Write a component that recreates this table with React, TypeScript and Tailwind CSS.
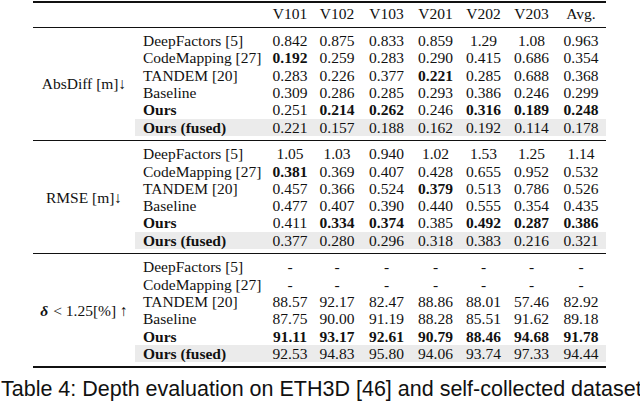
import React from 'react'

// "*" in front of a value means the cell is bold
type Row = { name: string; bold?: boolean; fused?: boolean; vals: string[] }
type Section = { label: React.ReactNode; rows: Row[] }

const cols = ['V101', 'V102', 'V103', 'V201', 'V202', 'V203', 'Avg.']

const sections: Section[] = [
  {
    label: <>AbsDiff [m]↓</>,
    rows: [
      { name: 'DeepFactors [5]', vals: ['0.842', '0.875', '0.833', '0.859', '1.29', '1.08', '0.963'] },
      { name: 'CodeMapping [27]', vals: ['*0.192', '0.259', '0.283', '0.290', '0.415', '0.686', '0.354'] },
      { name: 'TANDEM [20]', vals: ['0.283', '0.226', '0.377', '*0.221', '0.285', '0.688', '0.368'] },
      { name: 'Baseline', vals: ['0.309', '0.286', '0.285', '0.293', '0.386', '0.246', '0.299'] },
      { name: 'Ours', bold: true, vals: ['0.251', '*0.214', '*0.262', '0.246', '*0.316', '*0.189', '*0.248'] },
      { name: 'Ours (fused)', bold: true, fused: true, vals: ['0.221', '0.157', '0.188', '0.162', '0.192', '0.114', '0.178'] },
    ],
  },
  {
    label: <>RMSE [m]↓</>,
    rows: [
      { name: 'DeepFactors [5]', vals: ['1.05', '1.03', '0.940', '1.02', '1.53', '1.25', '1.14'] },
      { name: 'CodeMapping [27]', vals: ['*0.381', '0.369', '0.407', '0.428', '0.655', '0.952', '0.532'] },
      { name: 'TANDEM [20]', vals: ['0.457', '0.366', '0.524', '*0.379', '0.513', '0.786', '0.526'] },
      { name: 'Baseline', vals: ['0.477', '0.407', '0.390', '0.440', '0.555', '0.354', '0.435'] },
      { name: 'Ours', bold: true, vals: ['0.411', '*0.334', '*0.374', '0.385', '*0.492', '*0.287', '*0.386'] },
      { name: 'Ours (fused)', bold: true, fused: true, vals: ['0.377', '0.280', '0.296', '0.318', '0.383', '0.216', '0.321'] },
    ],
  },
  {
    label: (
      <>
        <span className="italic font-bold mr-[5px]">δ</span>&lt; 1.25[%] ↑
      </>
    ),
    rows: [
      { name: 'DeepFactors [5]', vals: ['-', '-', '-', '-', '-', '-', '-'] },
      { name: 'CodeMapping [27]', vals: ['-', '-', '-', '-', '-', '-', '-'] },
      { name: 'TANDEM [20]', vals: ['88.57', '92.17', '82.47', '88.86', '88.01', '57.46', '82.92'] },
      { name: 'Baseline', vals: ['87.75', '90.00', '91.19', '88.28', '85.51', '91.62', '89.18'] },
      { name: 'Ours', bold: true, vals: ['*91.11', '*93.17', '*92.61', '*90.79', '*88.46', '*94.68', '*91.78'] },
      { name: 'Ours (fused)', bold: true, fused: true, vals: ['92.53', '94.83', '95.80', '94.06', '93.74', '97.33', '94.44'] },
    ],
  },
]

const grid = 'grid grid-cols-[102px_133px_44px_50px_49px_49px_47px_49px_50px]'
const serif = "font-['Liberation_Serif','Times_New_Roman',serif]"

function TableSection({ section }: { section: Section }) {
  return (
    <div className="pt-[4.3px] pb-[4px] border-b border-[#111]">
      <div className={`${grid} grid-rows-[repeat(6,17.3px)]`}>
        <div className={`row-span-6 flex items-center justify-center whitespace-nowrap ${serif}`}>
          {section.label}
        </div>
        {section.rows.map((r) => (
          <React.Fragment key={r.name}>
            <div
              className={`flex items-center pl-[8px] whitespace-nowrap ${serif} ${r.bold ? 'font-bold' : ''} ${r.fused ? 'bg-[#ebebeb]' : ''}`}
            >
              {r.name}
            </div>
            {r.vals.map((v, i) => (
              <div
                key={i}
                className={`flex items-center justify-center ${serif} ${v.startsWith('*') ? 'font-bold' : ''} ${r.fused ? 'bg-[#ebebeb]' : ''}`}
              >
                {v.replace('*', '')}
              </div>
            ))}
          </React.Fragment>
        ))}
      </div>
    </div>
  )
}

export default function App() {
  return (
    <div className="w-[640px] h-[404px] overflow-hidden bg-white text-[#111]">
      <div className={`ml-[33px] w-[573px] mt-px border-t-2 border-[#111] ${serif} text-[15.5px] leading-none`}>
        <div className={`${grid} h-[25px] pb-[3px] border-b border-[#111]`}>
          <div />
          <div />
          {cols.map((c) => (
            <div key={c} className="flex items-center justify-center">
              {c}
            </div>
          ))}
        </div>
        {sections.map((s, i) => (
          <TableSection key={i} section={s} />
        ))}
        <div className="h-px bg-[#111]" />
      </div>
      <p className="mt-[9px] ml-[1px] whitespace-nowrap font-['Liberation_Sans',Arial,sans-serif] text-[21.5px] leading-[24px] text-[#111]">
        Table 4: Depth evaluation on ETH3D [46] and self-collected dataset
      </p>
    </div>
  )
}
